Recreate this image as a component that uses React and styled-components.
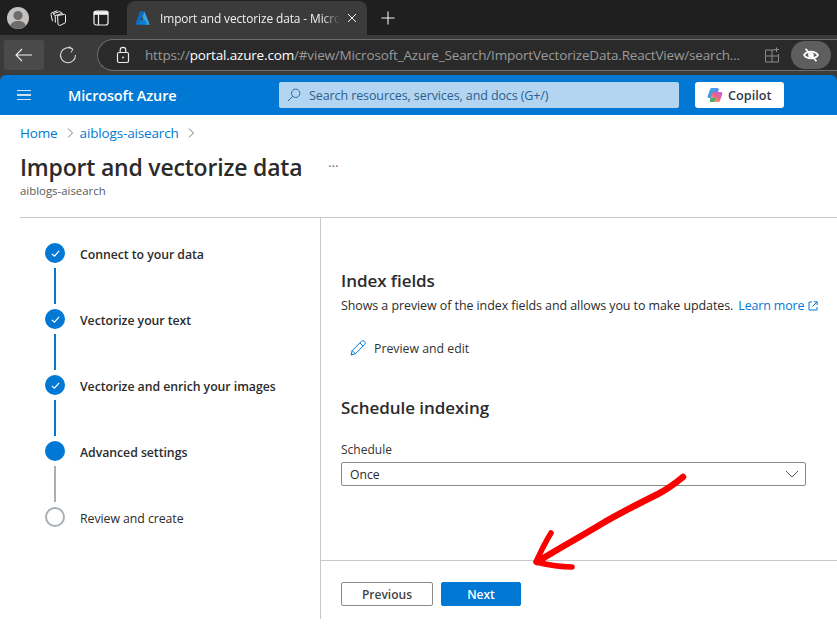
import React from "react";
import styled, { createGlobalStyle } from "styled-components";

const Global = createGlobalStyle`
  html, body { margin: 0; padding: 0; background: #fff; }
  * { box-sizing: border-box; }
  body { font-family: "Open Sans", "Noto Sans", "Liberation Sans", sans-serif; }
`;

const Page = styled.div`
  position: relative;
  width: 837px;
  height: 624px;
  overflow: hidden;
  background: #fff;
  display: flex;
  flex-direction: column;
`;

const TabStrip = styled.div`
  height: 35px;
  background: #1f1f1f;
  display: flex;
  align-items: flex-end;
  padding-left: 7px;
  flex: none;
`;
const Avatar = styled.div`
  width: 22px;
  height: 22px;
  margin-bottom: 6px;
  border-radius: 50%;
  background: #c4c2c0;
  overflow: hidden;
  flex: none;
`;
const StripIcon = styled.div`
  width: 16px;
  height: 16px;
  margin: 0 0 9px ${(p) => p.$ml}px;
  color: #f2f2f2;
  display: flex;
  flex: none;
`;
const Tab = styled.div`
  width: 240px;
  height: 34px;
  margin-left: 18px;
  background: #3b3b3b;
  border-radius: 8px 8px 0 0;
  display: flex;
  align-items: center;
  padding: 0 10px 1px 8px;
  color: #f0f0f0;
  font-size: 11.9px;
  flex: none;
`;
const TabTitle = styled.span`
  margin-left: 10px;
  width: 184px;
  white-space: nowrap;
  overflow: hidden;
  letter-spacing: -0.1px;
  -webkit-mask-image: linear-gradient(90deg, #000 88%, transparent 98%);
  mask-image: linear-gradient(90deg, #000 88%, transparent 98%);
`;
const NewTab = styled.div`
  width: 16px;
  height: 16px;
  margin: 0 0 9px 13px;
  color: #f2f2f2;
  display: flex;
`;

const AddressRow = styled.div`
  height: 40px;
  background: #3b3b3b;
  display: flex;
  align-items: center;
  padding-left: 4px;
  flex: none;
`;
const BackButton = styled.div`
  width: 40px;
  height: 30px;
  background: #4a4a4a;
  border-radius: 3px;
  display: flex;
  align-items: center;
  justify-content: center;
  color: #efefef;
  flex: none;
`;
const Reload = styled.div`
  width: 20px;
  height: 20px;
  margin-left: 14px;
  color: #dcdcdc;
  display: flex;
  flex: none;
`;
const Pill = styled.div`
  flex: none;
  width: 760px;
  height: 32px;
  margin-left: 19px;
  border: 1px solid #6e6e6e;
  border-right: 0;
  border-radius: 16px 0 0 16px;
  background: #2a2a2a;
  display: flex;
  align-items: center;
  padding-left: 18px;
  font-size: 13.5px;
  white-space: nowrap;
  color: #9a9a9a;
`;
const Lock = styled.div`
  width: 14px;
  height: 18px;
  color: #eee;
  display: flex;
  margin-right: 15px;
  flex: none;
`;
const UrlHost = styled.span`
  color: #fff;
`;
const Url = styled.span`
  width: 619px;
  flex: none;
  letter-spacing: -0.17px;
`;
const SplitIcon = styled.div`
  width: 16px;
  height: 16px;
  color: #8c8c8c;
  display: flex;
  flex: none;
`;
const EyeButton = styled.div`
  width: 40px;
  height: 28px;
  margin-left: 11px;
  border-radius: 14px;
  background: #5e5e5e;
  color: #fff;
  display: flex;
  align-items: center;
  justify-content: center;
  flex: none;
`;

const AzureWrap = styled.div`
  background: #3b3b3b;
  flex: none;
`;
const AzureBar = styled.div`
  height: 40px;
  background: #0078d4;
  border-radius: 6px 6px 0 0;
  display: flex;
  align-items: center;
  color: #fff;
`;
const Burger = styled.div`
  width: 14px;
  margin-left: 17px;
  display: flex;
  flex-direction: column;
  gap: 3px;
  span { display: block; height: 1.5px; background: #cfe4f6; }
`;
const Brand = styled.div`
  margin-left: 37px;
  width: 211px;
  font-size: 14.5px;
  font-weight: 600;
  letter-spacing: -0.15px;
`;
const SearchBox = styled.div`
  width: 400px;
  height: 26px;
  background: #b3d5f1;
  border-radius: 2px;
  display: flex;
  align-items: center;
  padding-left: 8px;
  color: #2b5f8e;
  font-size: 12.5px;
  letter-spacing: -0.1px;
`;
const SearchIconBox = styled.div`
  width: 14px;
  height: 14px;
  margin-right: 8px;
  display: flex;
  color: #2b6ba3;
`;
const CopilotButton = styled.div`
  width: 89px;
  height: 26px;
  margin-left: 16px;
  background: #fff;
  border-radius: 3px;
  display: flex;
  align-items: center;
  padding-left: 12px;
  gap: 5px;
  color: #323a4a;
  font-size: 12.7px;
  font-weight: 600;
`;

const Header = styled.div`
  padding: 10px 0 0 20px;
  flex: none;
`;
const Crumbs = styled.div`
  height: 16px;
  display: flex;
  align-items: center;
  font-size: 13.5px;
  letter-spacing: -0.15px;
  color: #0078d4;
`;
const CrumbSep = styled.div`
  width: 8px;
  height: 10px;
  margin: 0 ${(p) => p.$mr}px 0 8px;
  color: #7a7a7a;
  display: flex;
`;
const TitleRow = styled.div`
  display: flex;
  align-items: center;
  margin-top: 9px;
  height: 34px;
`;
const Title = styled.h1`
  margin: 0;
  font-size: 23px;
  font-weight: 600;
  color: #2b2b2b;
  white-space: nowrap;
  letter-spacing: -0.2px;
`;
const More = styled.span`
  margin: -1px 0 0 26px;
  color: #555;
  font-size: 12px;
  letter-spacing: 0.3px;
`;
const Sub = styled.div`
  font-size: 11.4px;
  color: #595959;
  line-height: 14px;
`;

const Body = styled.div`
  margin: 19px 0 0 20px;
  border-top: 1px solid #c8c8c8;
  height: 402px;
  display: flex;
  flex: none;
`;
const Stepper = styled.div`
  width: 301px;
  border-right: 1px solid #c8c8c8;
  padding: 25px 0 0 25px;
  flex: none;
`;
const Step = styled.div`
  display: flex;
  align-items: center;
  height: 20px;
  gap: 15px;
`;
const StepDot = styled.div`
  width: 20px;
  height: 20px;
  border-radius: 50%;
  flex: none;
  background: ${(p) => (p.$todo ? "transparent" : "#0078d4")};
  border: ${(p) => (p.$todo ? "2px solid #a6b0b5" : "none")};
  display: flex;
  align-items: center;
  justify-content: center;
  color: #fff;
`;
const StepLabel = styled.span`
  margin-top: 2px;
  font-size: 12.3px;
  font-weight: ${(p) => (p.$todo ? 400 : 600)};
  color: #2b2b2b;
  letter-spacing: -0.05px;
`;
const StepLine = styled.div`
  width: 2px;
  height: 36px;
  margin: 5px 0 5px 9px;
  background: ${(p) => (p.$todo ? "#a6b0b5" : "#0078d4")};
`;

const Main = styled.div`
  flex: 1;
  display: flex;
  flex-direction: column;
  min-width: 0;
`;
const Content = styled.div`
  height: 342px;
  padding: 52px 31px 0 20px;
  flex: none;
`;
const SectionTitle = styled.h2`
  margin: ${(p) => p.$mt}px 0 0;
  font-size: 17px;
  font-weight: 600;
  color: #2b2b2b;
  line-height: 22px;
  letter-spacing: -0.05px;
`;
const Desc = styled.div`
  margin-top: 4px;
  display: flex;
  align-items: center;
  font-size: 12.45px;
  line-height: 20px;
  letter-spacing: -0.06px;
  color: #2b2b2b;
  white-space: nowrap;
`;
const LearnMore = styled.span`
  color: #0078d4;
  margin-left: 5px;
  letter-spacing: -0.15px;
`;
const ExtIcon = styled.div`
  width: 10px;
  height: 10px;
  margin-left: 4px;
  color: #0078d4;
  display: flex;
`;
const EditAction = styled.div`
  display: flex;
  align-items: center;
  margin: 22px 0 0 9px;
  height: 20px;
  gap: 8px;
  font-size: 12.3px;
  color: #333;
`;
const PencilBox = styled.div`
  width: 16px;
  height: 16px;
  color: #0078d4;
  display: flex;
`;
const FieldLabel = styled.div`
  margin-top: 23px;
  font-size: 12px;
  line-height: 16px;
  color: #333;
`;
const Select = styled.div`
  margin-top: 4px;
  width: 465px;
  height: 24px;
  border: 1px solid #8a8a8a;
  border-radius: 2px;
  display: flex;
  align-items: center;
  justify-content: space-between;
  padding: 0 6px 0 8px;
  font-size: 12.2px;
  color: #2b2b2b;
`;
const Chevron = styled.div`
  width: 14px;
  height: 8px;
  color: #555;
  display: flex;
`;
const Footer = styled.div`
  flex: 1;
  border-top: 1px solid #c8c8c8;
  padding: 21px 0 0 20px;
  display: flex;
  gap: 8px;
  align-items: flex-start;
`;
const Button = styled.div`
  height: 24px;
  width: ${(p) => p.$w}px;
  border-radius: 2px;
  border: 1px solid ${(p) => (p.$primary ? "#0078d4" : "#8a8a8a")};
  background: ${(p) => (p.$primary ? "#0078d4" : "#fff")};
  color: ${(p) => (p.$primary ? "#fff" : "#444")};
  font-size: 12px;
  font-weight: 600;
  display: flex;
  align-items: center;
  justify-content: center;
`;
const ArrowOverlay = styled.svg`
  position: absolute;
  left: 0;
  top: 0;
  pointer-events: none;
`;

const Check = () => (
  <svg width="11" height="11" viewBox="0 0 12 12" fill="none" stroke="currentColor" strokeWidth="1.3">
    <path d="M2 6.4 L4.8 9 L10 3.2" />
  </svg>
);

const steps = [
  { label: "Connect to your data", state: "done" },
  { label: "Vectorize your text", state: "done" },
  { label: "Vectorize and enrich your images", state: "done" },
  { label: "Advanced settings", state: "current" },
  { label: "Review and create", state: "todo" },
];

const Sep = ({ mr }) => (
  <CrumbSep $mr={mr}>
    <svg width="8" height="10" viewBox="0 0 8 10" fill="none" stroke="currentColor" strokeWidth="1">
      <path d="M2 0.5 L6.5 5 L2 9.5" />
    </svg>
  </CrumbSep>
);

export default function App() {
  return (
    <Page>
      <Global />
      <TabStrip>
        <Avatar>
          <svg width="22" height="22" viewBox="0 0 22 22">
            <circle cx="11" cy="8.5" r="4.6" fill="#6f6d6b" />
            <path d="M2.5 22 C3 15.5 7 14 11 14 C15 14 19 15.5 19.5 22 Z" fill="#6f6d6b" />
          </svg>
        </Avatar>
        <StripIcon $ml={21}>
          <svg width="16" height="16" viewBox="0 0 16 16" fill="none" stroke="currentColor" strokeWidth="1">
            <path d="M7.6 5.4 L14.6 4.4 Q15.5 4.4 15.5 5.4 V12.2 Q15.5 12.8 15 13 L9.8 15.5 Q8.2 15.4 8 14 Z" />
            <path d="M5.2 5.6 L5.4 12.6 M5.2 5.6 L12.5 3.4 M5.2 5.6 L3 3.8 L9.5 1.6 L12.5 3.4 M2.5 11.2 L1 4.2 Q0.8 3.2 1.8 2.8 L7.4 0.7" />
          </svg>
        </StripIcon>
        <StripIcon $ml={27}>
          <svg width="16" height="16" viewBox="0 0 16 16" fill="none" stroke="currentColor" strokeWidth="1.2">
            <rect x="1" y="1" width="14" height="14" rx="2.2" />
            <path d="M1 1.5 H15 V4.5 H1 Z" fill="currentColor" strokeWidth="0.6" />
            <path d="M5.5 4.5 V15" />
          </svg>
        </StripIcon>
        <Tab>
          <svg width="15" height="14" viewBox="0 0 15 14" style={{ flex: "none" }}>
            <path d="M5 0.3 H9.3 L4.5 13.7 H0.2 Z" fill="#0f6cbd" />
            <path d="M9.3 0.3 L14.8 13.7 H10 L7.5 6 Z" fill="#35a7e8" />
            <path d="M6 9 H10.5 L12 13.7 H3.5 Z" fill="#0c7fd9" />
          </svg>
          <TabTitle>Import and vectorize data - Microsoft Azure</TabTitle>
          <svg width="10" height="10" viewBox="0 0 10 10" stroke="#eee" strokeWidth="1" style={{ flex: "none", marginLeft: 3 }}>
            <path d="M1 1 L9 9 M9 1 L1 9" />
          </svg>
        </Tab>
        <NewTab>
          <svg width="16" height="16" viewBox="0 0 16 16" stroke="currentColor" strokeWidth="1.1">
            <path d="M8 1.5 V14.5 M1.5 8 H14.5" />
          </svg>
        </NewTab>
      </TabStrip>
      <AddressRow>
        <BackButton>
          <svg width="18" height="14" viewBox="0 0 18 14" fill="none" stroke="currentColor" strokeWidth="1.1">
            <path d="M17 7 H1 M7 1 L1 7 L7 13" />
          </svg>
        </BackButton>
        <Reload>
          <svg width="20" height="20" viewBox="0 0 20 20" fill="none" stroke="currentColor" strokeWidth="1.1">
            <path d="M14.5 4.2 A7.5 7.5 0 1 0 17.5 10" />
            <path d="M11 1.5 L15 4.3 L13 7.5" strokeWidth="1" />
          </svg>
        </Reload>
        <Pill>
          <Lock>
            <svg width="14" height="18" viewBox="0 0 14 18" fill="none" stroke="currentColor" strokeWidth="1.2">
              <rect x="1.5" y="6.5" width="11" height="10" rx="1.5" />
              <path d="M4.2 6.5 V4.2 A2.8 2.8 0 0 1 9.8 4.2 V6.5" />
              <circle cx="7" cy="11.5" r="0.9" fill="currentColor" stroke="none" />
            </svg>
          </Lock>
          <Url>
            https://<UrlHost>portal.azure.com</UrlHost>/#view/Microsoft_Azure_Search/ImportVectorizeData.ReactView/search...
          </Url>
          <SplitIcon>
            <svg width="16" height="16" viewBox="0 0 16 16" fill="none" stroke="currentColor" strokeWidth="1">
              <path d="M11 3 H1.5 V15 H14.5 V7 M1.5 9 H14.5 M8 3 V15 M12.5 0.5 V5 M10.5 2.5 H15" />
            </svg>
          </SplitIcon>
          <EyeButton>
            <svg width="16" height="14" viewBox="0 0 16 14" fill="none" stroke="currentColor" strokeWidth="1.7">
              <path d="M1 7 C4 2.5 12 2.5 15 7 C12 11.5 4 11.5 1 7 Z" />
              <circle cx="8" cy="7" r="2" fill="currentColor" />
              <path d="M2.5 0.8 L13.5 13.2" />
            </svg>
          </EyeButton>
        </Pill>
      </AddressRow>
      <AzureWrap>
        <AzureBar>
          <Burger>
            <span />
            <span />
            <span />
          </Burger>
          <Brand>Microsoft Azure</Brand>
          <SearchBox>
            <SearchIconBox>
              <svg width="14" height="14" viewBox="0 0 14 14" fill="none" stroke="currentColor" strokeWidth="1">
                <circle cx="8.7" cy="5.3" r="4.2" />
                <path d="M5.7 8.3 L1 13" />
              </svg>
            </SearchIconBox>
            Search resources, services, and docs (G+/)
          </SearchBox>
          <CopilotButton>
            <svg width="16" height="16" viewBox="0 0 16 16">
              <defs>
                <linearGradient id="cpA" x1="0" y1="0" x2="1" y2="1">
                  <stop offset="0" stopColor="#2ab6e8" />
                  <stop offset="1" stopColor="#7a6ee0" />
                </linearGradient>
                <linearGradient id="cpB" x1="0" y1="1" x2="1" y2="0">
                  <stop offset="0" stopColor="#f7c331" />
                  <stop offset="0.55" stopColor="#ef5f8f" />
                  <stop offset="1" stopColor="#b765d8" />
                </linearGradient>
              </defs>
              <path d="M4.5 1 H10 C11 1 11.6 1.6 12 2.5 L9 9 C8.3 10.5 7 11 5.5 11 H2 C0.8 11 0.3 10 0.7 9 L3 2.5 C3.3 1.6 3.8 1 4.5 1 Z" fill="url(#cpA)" />
              <path d="M7 5 H13.5 C15 5 15.8 6 15.3 7.2 L13 13.5 C12.6 14.5 12 15 11 15 H4.5 C3.3 15 2.8 14 3.2 13 L5.2 6.5 C5.5 5.6 6 5 7 5 Z" fill="url(#cpB)" />
              <path d="M3.5 11 H7 C8 11 8.5 10.4 9 9.5 L10 7 L8 13 C7.7 14 7 15 5.5 15 H4 C3 15 2.7 14 3 13 Z" fill="#3bb36a" />
            </svg>
            Copilot
          </CopilotButton>
        </AzureBar>
      </AzureWrap>
      <Header>
        <Crumbs>
          Home
          <Sep mr={6} />
          aiblogs-aisearch
          <Sep mr={0} />
        </Crumbs>
        <TitleRow>
          <Title>Import and vectorize data</Title>
          <More>···</More>
        </TitleRow>
        <Sub>aiblogs-aisearch</Sub>
      </Header>
      <Body>
        <Stepper>
          {steps.map((s, i) => (
            <React.Fragment key={s.label}>
              <Step>
                <StepDot $todo={s.state === "todo"}>{s.state === "done" && <Check />}</StepDot>
                <StepLabel $todo={s.state === "todo"}>{s.label}</StepLabel>
              </Step>
              {i < steps.length - 1 && <StepLine $todo={s.state !== "done"} />}
            </React.Fragment>
          ))}
        </Stepper>
        <Main>
          <Content>
            <SectionTitle $mt={0}>Index fields</SectionTitle>
            <Desc>
              Shows a preview of the index fields and allows you to make updates.
              <LearnMore>Learn more</LearnMore>
              <ExtIcon>
                <svg width="10" height="10" viewBox="0 0 10 10" fill="none" stroke="currentColor" strokeWidth="1">
                  <path d="M4 1 H1 V9 H9 V6 M6 0.8 H9.2 V4 M9 1 L4.5 5.5" />
                </svg>
              </ExtIcon>
            </Desc>
            <EditAction>
              <PencilBox>
                <svg width="16" height="16" viewBox="0 0 16 16" fill="none" stroke="currentColor" strokeWidth="1">
                  <path d="M1 15 L2.2 10.5 L11.5 1.3 C12.5 0.5 13.7 0.6 14.6 1.5 C15.5 2.4 15.5 3.6 14.6 4.5 L5.4 13.8 Z M2.2 10.5 L5.4 13.8 M10 3 L13 6" />
                </svg>
              </PencilBox>
              Preview and edit
            </EditAction>
            <SectionTitle $mt={39}>Schedule indexing</SectionTitle>
            <FieldLabel>Schedule</FieldLabel>
            <Select>
              Once
              <Chevron>
                <svg width="14" height="8" viewBox="0 0 14 8" fill="none" stroke="currentColor" strokeWidth="1">
                  <path d="M1 1 L7 7 L13 1" />
                </svg>
              </Chevron>
            </Select>
          </Content>
          <Footer>
            <Button $w={92}>Previous</Button>
            <Button $w={80} $primary>Next</Button>
          </Footer>
        </Main>
      </Body>
      <ArrowOverlay width="837" height="624" viewBox="0 0 837 624" fill="none" stroke="#fa0000" strokeLinecap="round" strokeLinejoin="round">
        <path strokeWidth="6.5" d="M683 477 C672 486 668 489 658 494 C640 503 620 513 603 523 C580 537 556 550 537 562" />
        <path strokeWidth="5.5" d="M551 533 C546 541 541 551 536 562 C548 565 560 567 572 567" />
      </ArrowOverlay>
    </Page>
  );
}
